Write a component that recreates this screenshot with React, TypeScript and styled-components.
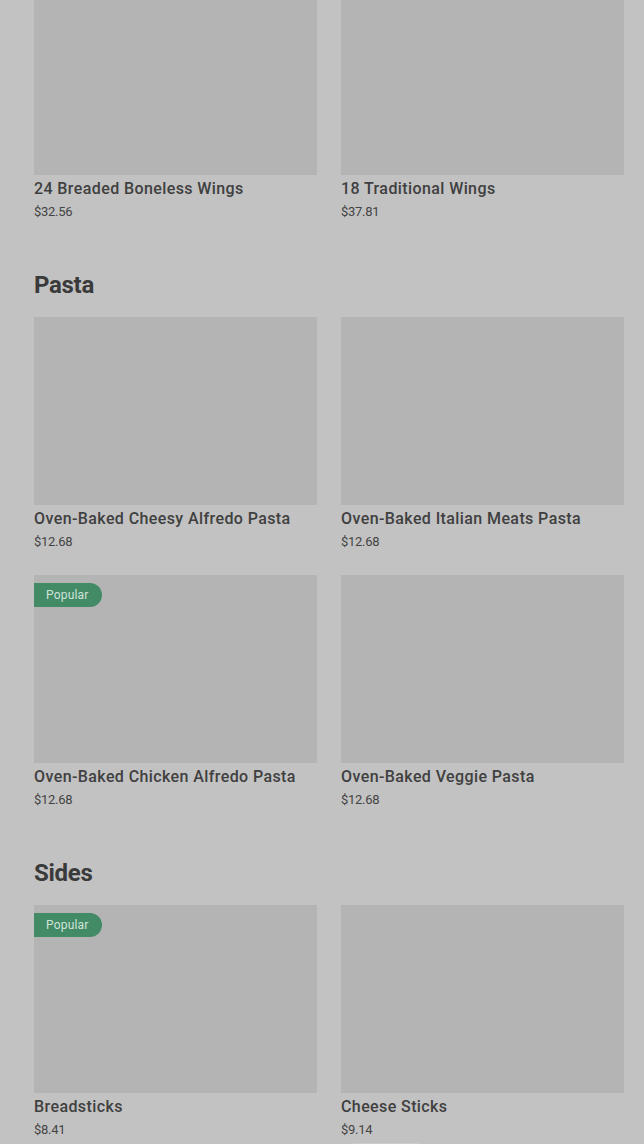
import styled, {createGlobalStyle} from 'styled-components';

interface MenuItem {
  name: string;
  price: string;
  popular?: boolean;
  tag?: boolean;
}

interface MenuSection {
  title?: string;
  items: MenuItem[];
}

const sections: MenuSection[] = [
  {
    items: [
      {name: '24 Breaded Boneless Wings', price: '$32.56'},
      {name: '18 Traditional Wings', price: '$37.81'},
    ],
  },
  {
    title: 'Pasta',
    items: [
      {name: 'Oven-Baked Cheesy Alfredo Pasta', price: '$12.68'},
      {name: 'Oven-Baked Italian Meats Pasta', price: '$12.68'},
      {name: 'Oven-Baked Chicken Alfredo Pasta', price: '$12.68', popular: true},
      {name: 'Oven-Baked Veggie Pasta', price: '$12.68'},
    ],
  },
  {
    title: 'Sides',
    items: [
      {name: 'Breadsticks', price: '$8.41', popular: true},
      {name: 'Cheese Sticks', price: '$9.14', tag: true},
    ],
  },
];

const GlobalStyle = createGlobalStyle`
  html, body {
    margin: 0;
    padding: 0;
    background: #c2c2c2;
    font-family: Roboto, 'Liberation Sans', sans-serif;
  }
`;

const App = () => {
  return (
    <>
      <GlobalStyle />
      <Viewport>
        <Content>
          {sections.map((section, i) => (
            <Section key={i}>
              {section.title && <SectionTitle>{section.title}</SectionTitle>}
              <Grid>
                {section.items.map(item => (
                  <Card key={item.name}>
                    <ImageBox>
                      {item.popular && <Badge>Popular</Badge>}
                    </ImageBox>
                    <ItemName>{item.name}</ItemName>
                    <ItemPrice>{item.price}</ItemPrice>
                    {item.tag && <Tag />}
                  </Card>
                ))}
              </Grid>
            </Section>
          ))}
        </Content>
      </Viewport>
    </>
  );
};

const Viewport = styled.div`
  height: 1144px;
  overflow: hidden;
`;
const Content = styled.div`
  /* list is scrolled a little: first row of pictures is cut at the top */
  margin-top: -13px;
  padding: 0 20px 0 34px;
  display: flex;
  flex-direction: column;
  gap: 48px;
`;
const Section = styled.section`
  display: flex;
  flex-direction: column;
  gap: 16px;
`;
const SectionTitle = styled.h2`
  margin: 0;
  font-size: 24px;
  line-height: 32px;
  font-weight: 700;
  color: #3a3a3a;
  letter-spacing: -0.3px;
`;
const Grid = styled.div`
  display: grid;
  grid-template-columns: 1fr 1fr;
  column-gap: 24px;
  row-gap: 24px;
`;
const Card = styled.div`
  display: flex;
  flex-direction: column;
  position: relative;
`;
const ImageBox = styled.div`
  position: relative;
  height: 188px;
  background: #b4b4b4;
`;
const Badge = styled.span`
  position: absolute;
  top: 8px;
  left: 0;
  height: 24px;
  padding: 0 13px 0 12px;
  display: flex;
  align-items: center;
  background: #438a67;
  color: #cfe3d8;
  font-size: 12px;
  letter-spacing: 0.2px;
  border-radius: 0 12px 12px 0;
`;
const ItemName = styled.div`
  margin-top: 4px;
  font-size: 16px;
  line-height: 20px;
  font-weight: 500;
  color: #404040;
  letter-spacing: 0.4px;
`;
const ItemPrice = styled.div`
  margin-top: 4px;
  font-size: 13px;
  line-height: 18px;
  color: #444;
  letter-spacing: -0.3px;
`;
const Tag = styled.div`
  margin: 4px 0 0 10px;
  width: 70px;
  height: 20px;
  border-radius: 4px;
  background: #cbcbcb;
`;

export default App;
